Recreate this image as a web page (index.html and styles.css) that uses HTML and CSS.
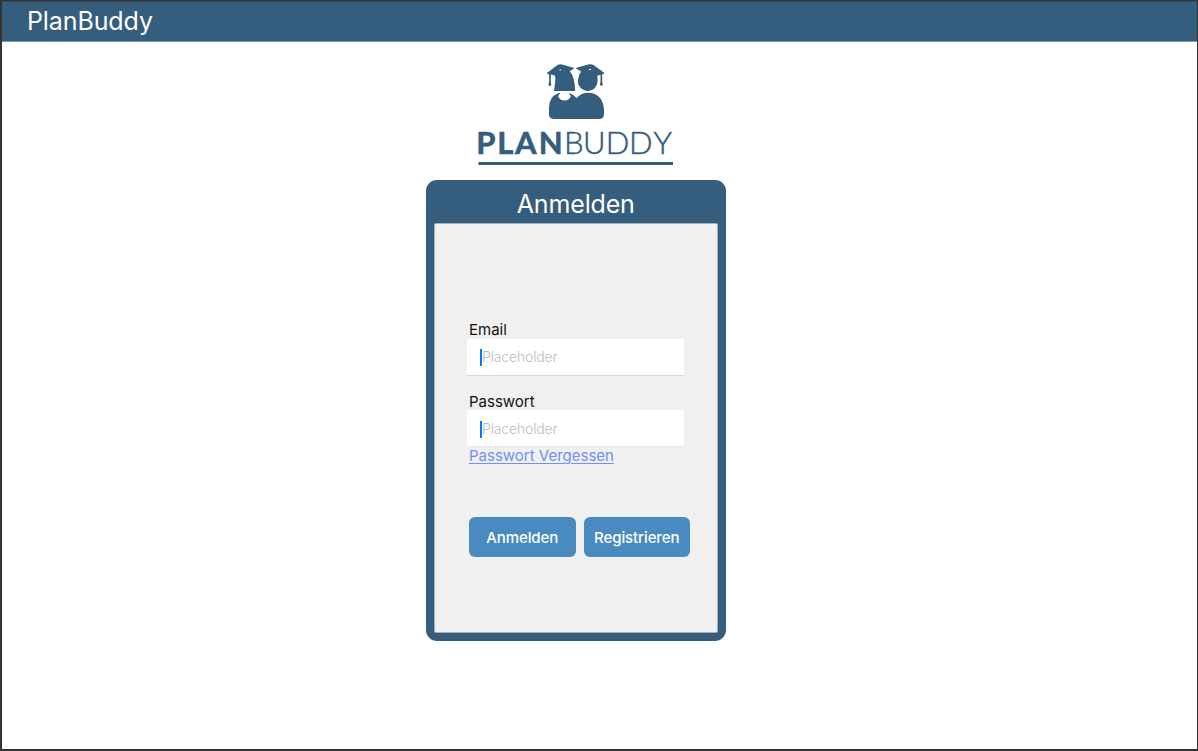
FILE: index.html
```html
<!DOCTYPE html>
<html lang="de">
<head>
<meta charset="utf-8">
<title>PlanBuddy</title>
<link rel="stylesheet" href="styles.css">
</head>
<body>
<div class="window">
  <header class="topbar">PlanBuddy</header>
  <main class="content">
    <svg class="logo" width="200" height="106" viewBox="475 61 200 106" role="img" aria-label="PlanBuddy">
      <g class="logo-shape">
        <path d="M546.500 73.200 557.500 65Q560 63.800 563 64.700L574.500 68 569.800 71.300Q574.800 77 575.200 91H554L555.500 79 554.800 75.500 550.800 74.500V82L551.200 85.300 549.800 86.300 548.400 84.500 549.100 82V74.500Z"/>
        <path d="M575.500 68 588 64.600Q591 63.800 593.500 65L604.800 73.200 602.200 74.500V81.500L602.800 85 601.300 86.300 599.800 84.500 600.500 82V74.800L597 76Q598 78.500 597.500 81A9.800 9.800 0 1 1 578.600 77.500Q579 73.500 581.200 71.800Z"/>
        <path d="M549 115V108Q549.300 97 557.500 93.600L560.500 92.800 558 96.300Q560 100.500 564.500 100.500 569 100.500 571 96.300L568.500 93Q573.500 94.200 576.500 98Q581.500 92.800 588 92.800C598 92.800 603.800 100 604 110V114Q604 119 599 119H554Q549.500 119 549 115Z"/>
      </g>
      <path class="logo-glint" d="M559.500 70h1.500M589 69.500h2"/>
      <text class="word-bold" x="476.300 497.300 515 538.700" y="154">PLAN</text>
      <text class="word-light" x="564 582.900 605.800 629 653.400" y="154">BUDDY</text>
      <path class="logo-rule" d="M478.500 163.500H673"/>
    </svg>
    <section class="card">
      <h1 class="card-title">Anmelden</h1>
      <form class="card-body">
        <label class="label">Email</label>
        <div class="field field-email"><span class="caret"></span><span class="placeholder">Placeholder</span></div>
        <label class="label label-password">Passwort</label>
        <div class="field field-password"><span class="caret"></span><span class="placeholder">Placeholder</span></div>
        <a class="forgot">Passwort Vergessen</a>
        <div class="actions">
          <button type="button" class="button">Anmelden</button>
          <button type="button" class="button">Registrieren</button>
        </div>
      </form>
    </section>
  </main>
</div>
</body>
</html>
```
FILE: styles.css
```css
* { box-sizing: border-box; }
body {
  margin: 0;
  font-family: Inter, "Liberation Sans", sans-serif;
  background: #fff;
}
.window {
  height: 751px;
  border: solid #333;
  border-width: 1px 1px 2px 2px;
  overflow: hidden;
}
.topbar {
  height: 41px;
  padding-left: 25px;
  border-top: 1px solid #3c4c5a;
  border-bottom: 1px solid #8199ae;
  background: #355d7d;
  color: #fff;
  font-size: 25px;
  line-height: 39px;
  letter-spacing: -0.1px;
}
.content {
  display: flex;
  flex-direction: column;
  align-items: flex-start;
  padding: 19px 0 0 424px;
}
.logo { margin-left: 49px; }
.logo-shape { fill: #355d7d; }
.logo-glint { stroke: #fff; stroke-width: 1; }
.logo-rule { stroke: #355d7d; stroke-width: 3; }
.word-bold, .word-light {
  font-family: Lato, sans-serif;
  font-size: 31px;
  fill: #355d7d;
  stroke: #355d7d;
}
.word-bold { font-weight: 700; stroke-width: 0.6; }
.word-light { font-weight: 300; stroke-width: 0.5; }
.card {
  width: 299.5px;
  height: 461px;
  margin-top: 12.5px;
  padding: 0 8px 8px;
  border-radius: 11px;
  background: #355d7d;
}
.card-title {
  height: 43.5px;
  margin: 0;
  padding-top: 3px;
  color: #fff;
  font-size: 25px;
  font-weight: 400;
  line-height: 43px;
  letter-spacing: -0.15px;
  text-align: center;
}
.card-body {
  display: flex;
  flex-direction: column;
  align-items: flex-start;
  height: 410px;
  padding: 97px 0 0 32px;
  border: 1px solid #a3b1bd;
  border-radius: 2px;
  background: #f0f0f0;
}
.label {
  height: 18px;
  padding-left: 2px;
  color: #111;
  font-size: 15px;
  line-height: 18px;
}
.label-password { height: 17px; margin-top: 17px; }
.field {
  display: flex;
  align-items: center;
  width: 217px;
  height: 37px;
  padding-left: 13px;
  border-bottom: 1px solid #d9d9d9;
  background: #fff;
}
.field-password { padding-top: 2px; border-bottom-color: #e8e8e8; }
.caret { width: 2px; height: 17px; background: #007aff; }
.placeholder {
  margin-top: -2px;
  color: #bdbdbd;
  font-size: 14px;
  font-weight: 300;
  letter-spacing: -0.15px;
}
.forgot {
  margin-left: 2px;
  color: #748df8;
  font-size: 15px;
  line-height: 18px;
  text-decoration: underline;
  text-decoration-thickness: 1px;
  text-underline-offset: 2px;
}
.actions {
  display: flex;
  gap: 8px;
  margin: 52px 0 0 2px;
}
.button {
  width: 106.5px;
  height: 40px;
  padding: 0;
  border: 0;
  border-radius: 6px;
  background: #498bc0;
  color: #fff;
  font: 500 15px Inter, "Liberation Sans", sans-serif;
  letter-spacing: -0.1px;
}
```
